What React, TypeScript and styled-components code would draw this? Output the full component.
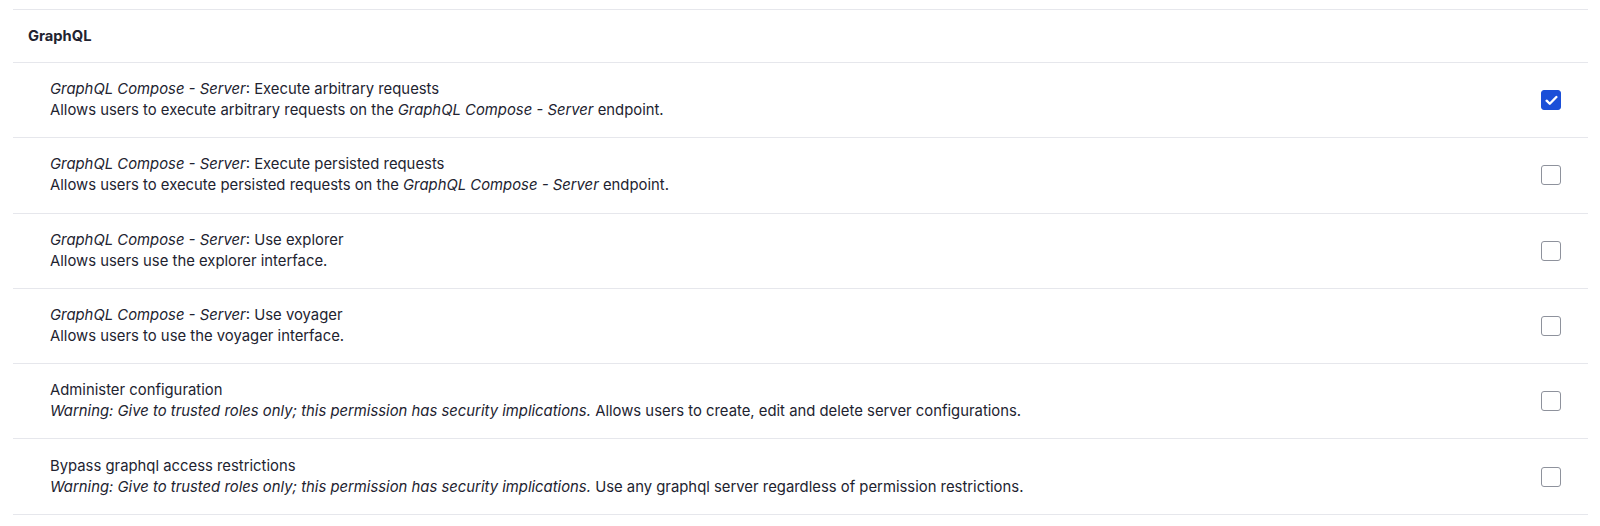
import React from 'react'
import styled, { createGlobalStyle } from 'styled-components'

const GlobalStyle = createGlobalStyle`
  body {
    margin: 0;
    background: #fff;
    font-family: Inter, "Noto Sans", sans-serif;
    color: #222330;
  }
`

const Page = styled.div`
  padding: 9px 12px 0 13px;
`

const Table = styled.div`
  display: flex;
  flex-direction: column;
  border-top: 1px solid #e6e7ec;
`

const HeaderRow = styled.div`
  display: flex;
  align-items: center;
  height: 52px;
  padding-left: 15px;
  border-bottom: 1px solid #e6e7ec;
  font-size: 14.7px;
  font-weight: 700;
`

const Row = styled.div`
  display: flex;
  align-items: center;
  height: 74.3px;
  border-bottom: 1px solid #e6e7ec;
`

const Description = styled.div`
  flex: 1;
  padding-left: 37px;
  font-size: 14.85px;
  line-height: 21px;
`

const Line = styled.div`
  white-space: nowrap;
`

const CheckCell = styled.div`
  display: flex;
  justify-content: flex-end;
  padding-right: 27px;
`

const Box = styled.span<{ $checked?: boolean }>`
  width: 20px;
  height: 20px;
  box-sizing: border-box;
  border-radius: 3px;
  display: flex;
  align-items: center;
  justify-content: center;
  background: ${(p) => (p.$checked ? '#1b4fd8' : '#fff')};
  border: 1px solid ${(p) => (p.$checked ? '#1b4fd8' : '#8e929c')};
`

const Check = () => (
  <svg width="13" height="11" viewBox="0 0 12 10" fill="none">
    <path d="M1.5 5.2 4.4 8 10.5 1.8" stroke="#fff" strokeWidth="2.2" strokeLinecap="round" strokeLinejoin="round" />
  </svg>
)

type Perm = {
  title: React.ReactNode
  desc: React.ReactNode
  checked?: boolean
}

const Mod = () => <em>GraphQL Compose - Server</em>
const Warn = () => <em>Warning: Give to trusted roles only; this permission has security implications.</em>

const perms: Perm[] = [
  {
    title: <><Mod />: Execute arbitrary requests</>,
    desc: <>Allows users to execute arbitrary requests on the <Mod /> endpoint.</>,
    checked: true,
  },
  {
    title: <><Mod />: Execute persisted requests</>,
    desc: <>Allows users to execute persisted requests on the <Mod /> endpoint.</>,
  },
  {
    title: <><Mod />: Use explorer</>,
    desc: <>Allows users use the explorer interface.</>,
  },
  {
    title: <><Mod />: Use voyager</>,
    desc: <>Allows users to use the voyager interface.</>,
  },
  {
    title: <>Administer configuration</>,
    desc: <><Warn /> Allows users to create, edit and delete server configurations.</>,
  },
  {
    title: <>Bypass graphql access restrictions</>,
    desc: <><Warn /> Use any graphql server regardless of permission restrictions.</>,
  },
]

export default function App() {
  return (
    <>
      <GlobalStyle />
      <Page>
        <Table>
          <HeaderRow>GraphQL</HeaderRow>
          {perms.map((p, i) => (
            <Row key={i}>
              <Description>
                <Line>{p.title}</Line>
                <Line>{p.desc}</Line>
              </Description>
              <CheckCell>
                <Box $checked={p.checked}>{p.checked && <Check />}</Box>
              </CheckCell>
            </Row>
          ))}
        </Table>
      </Page>
    </>
  )
}
